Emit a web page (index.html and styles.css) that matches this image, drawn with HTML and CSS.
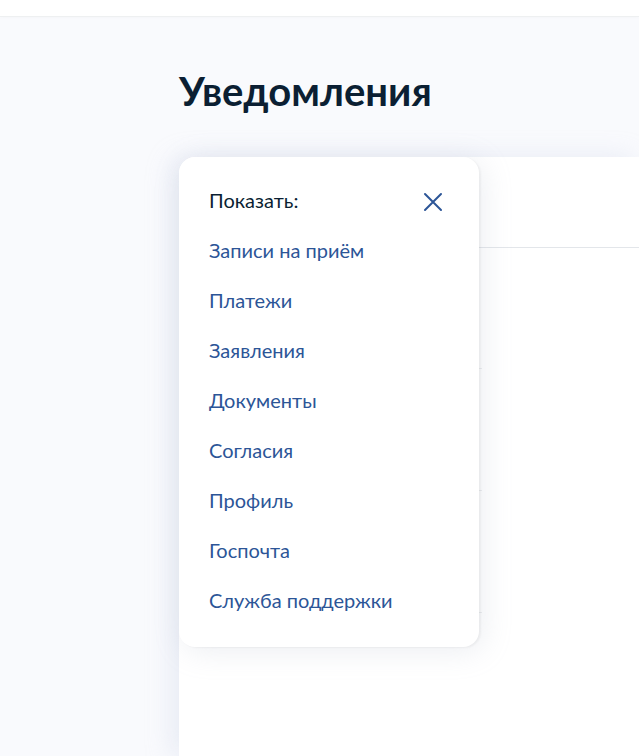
FILE: index.html
```html
<!DOCTYPE html>
<html lang="ru">
  <head>
    <meta charset="UTF-8" />
    <meta name="viewport" content="width=device-width, initial-scale=1.0" />
    <title>Уведомления</title>
    <link rel="stylesheet" href="styles.css">
  </head>
  <body>
    <div class="header"></div>

    <div class="page">
      <h1 class="page-title">Уведомления</h1>

      <div class="feed-card">
        <div class="feed-filter"></div>
        <div class="feed-list">
          <div class="feed-row"></div>
          <div class="feed-row"></div>
          <div class="feed-row"></div>
        </div>

        <!-- Filter popup -->
        <div class="filter-popup">
          <div class="popup-head">
            <span class="popup-label">Показать:</span>
            <button class="popup-close" aria-label="Закрыть">
              <svg width="20" height="20" viewBox="0 0 20 20">
                <path d="M2 2 L18 18 M18 2 L2 18" stroke="#2c5597" stroke-width="2" fill="none" stroke-linecap="round" />
              </svg>
            </button>
          </div>
          <a class="popup-link" href="#">Записи на приём</a>
          <a class="popup-link" href="#">Платежи</a>
          <a class="popup-link" href="#">Заявления</a>
          <a class="popup-link" href="#">Документы</a>
          <a class="popup-link" href="#">Согласия</a>
          <a class="popup-link" href="#">Профиль</a>
          <a class="popup-link" href="#">Госпочта</a>
          <a class="popup-link" href="#">Служба поддержки</a>
        </div>
      </div>
    </div>
  </body>
</html>
```

FILE: styles.css
```css
body {
  margin: 0;
  padding: 0;
  overflow: hidden;
  background: #f9fafd;
  font-family: Lato, 'Noto Sans', sans-serif;
  color: #0b1f33;
}

.header {
  height: 16px;
  background: #fff;
  border-bottom: 1px solid #eef0f1;
  box-shadow: 0 1px 3px rgba(0, 0, 0, 0.02);
}

.page {
  padding-left: 179px;
}

.page-title {
  margin: 0;
  padding-top: 50px;
  height: 140px;
  box-sizing: border-box;
  font-size: 40px;
  font-weight: 700;
  line-height: 48px;
  color: #0b1f33;
}

/* Notification card */
.feed-card {
  position: relative;
  background: #fff;
  min-height: 599px;
  border-top-left-radius: 16px;
  box-shadow: -8px 0 24px rgba(200, 210, 228, 0.35);
}

.feed-filter {
  height: 90px;
  border-bottom: 1px solid #e3e6ea;
}

.feed-list {
  width: 303px;
}

.feed-row {
  height: 121px;
  border-bottom: 1px solid #eceef0;
}

.feed-row:first-child {
  height: 120px;
}

/* Filter popup */
.filter-popup {
  position: absolute;
  top: 0;
  left: 0;
  width: 300px;
  height: 490px;
  box-sizing: border-box;
  padding: 24px 30px 0;
  background: #fff;
  border-radius: 16px;
  box-shadow:
    2px 1px 2px rgba(0, 0, 0, 0.045),
    4px 4px 30px rgba(160, 170, 190, 0.2);
  display: flex;
  flex-direction: column;
}

.popup-head {
  display: flex;
  align-items: center;
  justify-content: space-between;
  height: 38px;
  margin-bottom: 12px;
}

.popup-label {
  font-size: 20px;
  color: #0b1f33;
}

.popup-close {
  border: 0;
  background: none;
  padding: 0;
  margin-right: 6px;
  margin-top: 4px;
  width: 20px;
  height: 20px;
  cursor: pointer;
}

.popup-close svg {
  display: block;
}

.popup-link {
  display: block;
  height: 50px;
  line-height: 38px;
  font-size: 20px;
  color: #2c5597;
  text-decoration: none;
}
```
